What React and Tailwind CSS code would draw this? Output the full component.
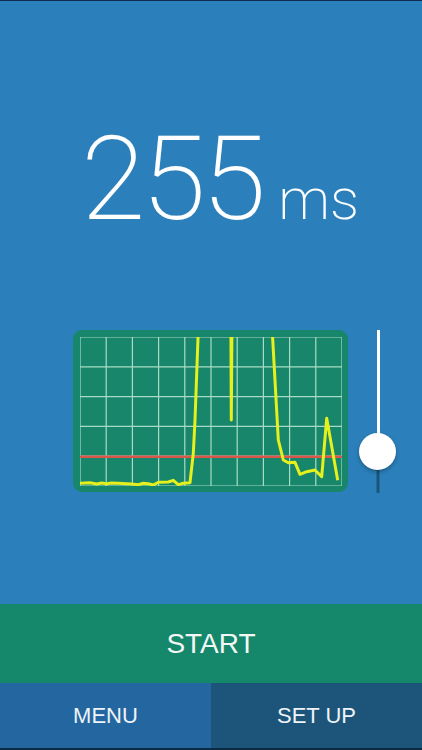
import React from "react";

const COLS = 10;
const ROWS = 5;
const W = 262;
const H = 149;

// latency samples, already in chart pixels (y grows downward, negative = off the top)
const trace = [
  [0, 146.3], [10, 145.7], [16.7, 147], [21.7, 146], [26.7, 146.7], [31.7, 146],
  [38.3, 146.3], [46.7, 146.7], [51.7, 147], [58.3, 147.7], [63.3, 146.3], [68.3, 146.7],
  [73.3, 148], [78.3, 145.3], [88.3, 145], [93.3, 143.3], [98.3, 147.7], [103.3, 146.3],
  [110, 145.7], [113.3, 116.3], [115, 83], [119.3, -34], [150.7, -60], [151.3, 83],
  [152.3, -60], [190.7, -34], [198.3, 103], [203.3, 123], [208.3, 125.7], [215, 125.3],
  [220, 137.3], [226.7, 134.7], [235, 133], [241.7, 139.7], [246.7, 81.3], [257.7, 143.3],
];

const Chart = () => {
  const cols = Array.from({ length: COLS + 1 }, (_, i) => (i * W) / COLS);
  const rows = Array.from({ length: ROWS + 1 }, (_, i) => (i * H) / ROWS);

  return (
    <div className="w-[275px] h-[162px] rounded-[9px] bg-[#17866b] pl-[7px] pt-[7px]">
      <svg width={W} height={H} viewBox={`0 0 ${W} ${H}`} className="block overflow-hidden">
        {cols.map((x) => (
          <line key={"c" + x} x1={x} y1={0} x2={x} y2={H} stroke="#a9dcc6" strokeWidth="1.2" />
        ))}
        {rows.map((y) => (
          <line key={"r" + y} x1={0} y1={y} x2={W} y2={y} stroke="#a9dcc6" strokeWidth="1.2" />
        ))}
        <line x1={0} y1={119.7} x2={W} y2={119.7} stroke="#d9584a" strokeWidth="2.4" />
        <polyline
          points={trace.map((p) => p.join(",")).join(" ")}
          fill="none"
          stroke="#e6f01c"
          strokeWidth="3"
          strokeLinejoin="round"
        />
      </svg>
    </div>
  );
};

const Slider = () => (
  <div className="relative w-[38px] h-[163px] flex justify-center">
    <div className="w-[3px] h-[122px] bg-white" />
    <div className="absolute left-1/2 -translate-x-1/2 top-[122px] w-[3px] h-[41px] bg-[#1d5479]" />
    <div className="absolute left-0 top-[103px] w-[37px] h-[37px] rounded-full bg-white shadow-[0_2px_4px_rgba(0,0,0,0.3)]" />
  </div>
);

export default function App() {
  return (
    <div
      className="w-[422px] h-[750px] flex flex-col bg-[#2b80bb] border-t border-[#0e2e4f] border-b-2 border-b-[#0b2a44] text-white overflow-hidden"
      style={{ fontFamily: "'Liberation Sans', Arial, sans-serif" }}
    >
      <div className="flex-1 flex flex-col">
        <div className="pt-[120px] pl-[81px] flex items-baseline" style={{ fontFamily: "Roboto, sans-serif" }}>
          <span className="text-[117px] leading-none font-extralight tracking-[-4px]">255</span>
          <span className="ml-[16px] text-[58px] leading-none font-extralight">ms</span>
        </div>
        <div className="mt-[92px] pl-[73px] flex items-start gap-[11px]">
          <Chart />
          <Slider />
        </div>
      </div>
      <button className="h-[79px] w-full bg-[#15876b] text-[28px] text-[#f2f7f5]">START</button>
      <div className="h-[65px] flex">
        <button className="flex-1 bg-[#2467a0] text-[22px] text-[#eef3f8]">MENU</button>
        <button className="flex-1 bg-[#1c5579] text-[22px] text-[#eef3f8]">SET UP</button>
      </div>
    </div>
  );
}
